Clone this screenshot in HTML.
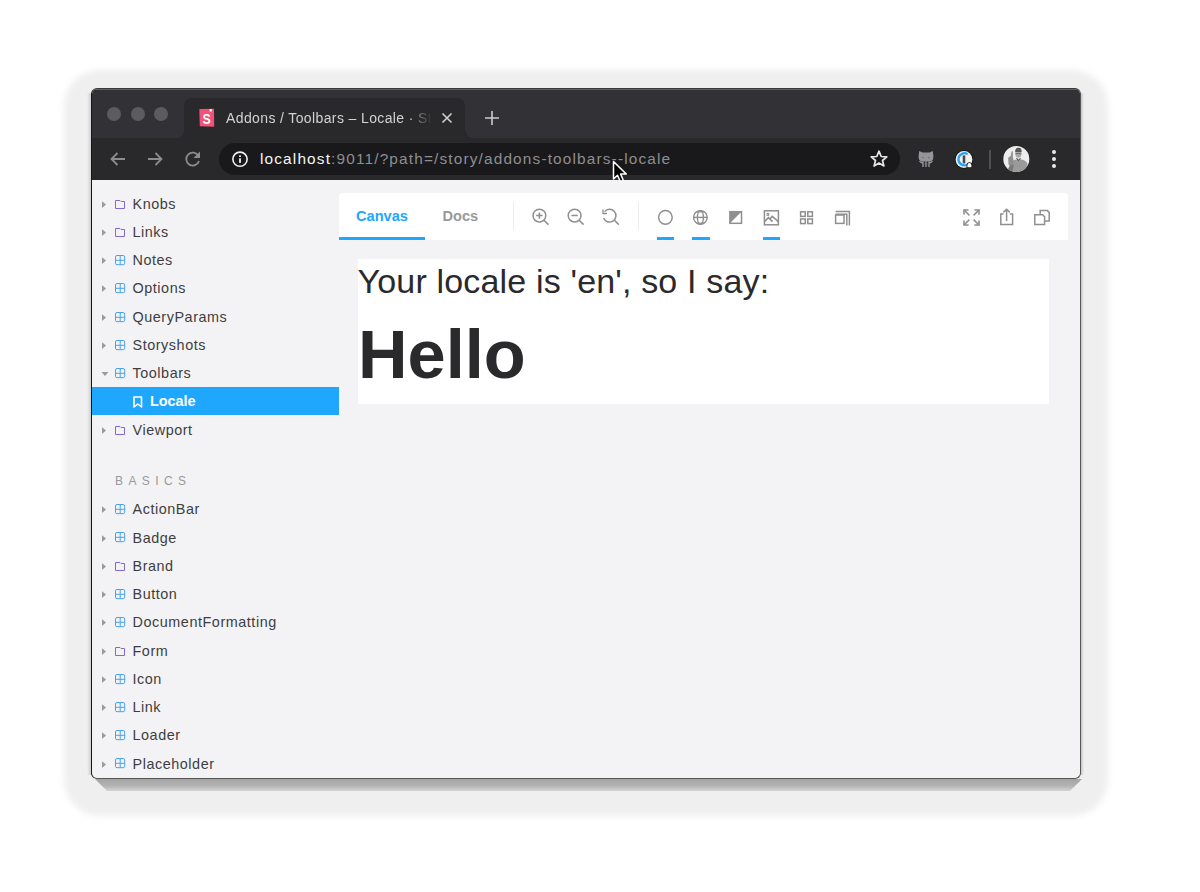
<!DOCTYPE html>
<html><head><meta charset="utf-8">
<style>
*{margin:0;padding:0;box-sizing:border-box}
html,body{width:1200px;height:892px;overflow:hidden;background:#fff;font-family:"Liberation Sans",sans-serif}
.a{position:absolute}
#shadow{left:64px;top:70px;width:1044px;height:746px;border-radius:36px;background:#efefef;filter:blur(3px)}
#shadow2{left:92px;top:779px;width:990px;height:12px;background:linear-gradient(#a4a4a4,#b2b2b2 55%,#d4d4d4);clip-path:polygon(3px 0,100% 0,calc(100% - 12px) 100%,15px 100%)}
#lsh{left:87px;top:93px;width:5px;height:682px;background:linear-gradient(90deg,#efefef,#c8c8c8)}
#rsh{left:1080px;top:93px;width:4px;height:682px;background:linear-gradient(90deg,#b8b8b8,#efefef)}
#win{left:91px;top:88px;width:990px;height:691px;border-radius:6px;background:#f3f3f5;border:1px solid #555;border-left-color:#151515;border-top-color:#3a3a3a}
#tabstrip{left:92px;top:89px;width:988px;height:49px;background:#323236;border-radius:5px 5px 0 0}
#toolbar{left:92px;top:138px;width:988px;height:42px;background:#29292c}
#tab{left:184px;top:98px;width:281px;height:40px;background:#29292c;border-radius:8px 8px 0 0}
.dot{width:14.4px;height:14.4px;border-radius:50%;background:#5c5c5e;top:106.8px}
#url{left:219px;top:143px;width:681px;height:32px;border-radius:16px;background:#19191c}
.urltxt{left:260px;top:150px;font-size:15.4px;letter-spacing:1.15px;color:#8e8e91;white-space:nowrap}
.urltxt b{font-weight:normal;color:#f4f4f4}
.tabtxt{left:226px;top:109.5px;font-size:14px;letter-spacing:0.38px;color:#d2d2d2;white-space:nowrap;width:207px;overflow:hidden;
 -webkit-mask-image:linear-gradient(90deg,#000 184px,rgba(0,0,0,.6) 190px,transparent 206px)}
#sel{left:92px;top:387px;width:247px;height:28px;background:#1ea7fd}
.item{left:132.5px;font-size:14.4px;letter-spacing:0.55px;color:#3e3e40;white-space:nowrap}
#panel{left:339px;top:193px;width:729px;height:47px;background:#fff;border-radius:4px 4px 0 0}
#canvas{left:358px;top:259px;width:691px;height:145px;background:#fff}
.big1{left:357.5px;top:262px;font-size:34px;letter-spacing:0.17px;color:#2a2a2c;white-space:nowrap}
.big2{left:358px;top:315.3px;font-size:68.6px;font-weight:bold;color:#2a2a2c;white-space:nowrap;letter-spacing:0px}
.ptab{top:208px;font-size:14.6px;font-weight:bold;white-space:nowrap}
</style></head><body>
<div id="shadow" class="a"></div>
<div id="shadow2" class="a"></div>
<div id="lsh" class="a"></div>
<div id="rsh" class="a"></div>
<div id="win" class="a"></div>
<div id="tabstrip" class="a"></div>
<div class="a" style="left:96px;top:89px;width:980px;height:1px;background:#606064"></div>
<div class="a dot" style="left:106.8px"></div>
<div class="a dot" style="left:130.5px"></div>
<div class="a dot" style="left:153.8px"></div>
<div id="tab" class="a"></div>
<svg class="a" style="left:176px;top:130px" width="9" height="8"><path d="M0 8Q8 8 8 0V8Z" fill="#29292c"/></svg>
<svg class="a" style="left:465px;top:130px" width="9" height="8"><path d="M9 8Q1 8 1 0V8Z" fill="#29292c"/><rect x="0" y="0" width="1" height="8" fill="#29292c"/></svg>
<svg class="a" style="left:199px;top:108px" width="16" height="20"><path d="M0.3 1.2L1.2 1L15 0.8L15.2 18.8L0.8 18.2Z" fill="#f0527a"/><g transform="translate(7.6,0) scale(0.82,1)"><text x="0" y="15.6" font-family="Liberation Sans" font-weight="bold" font-size="15" fill="#fff" text-anchor="middle">S</text></g><rect x="10.6" y="1.2" width="2.2" height="2.2" fill="#fff"/></svg>
<div class="a tabtxt">Addons / Toolbars – Locale · Storybook</div>
<svg class="a" style="left:441px;top:112px" width="12" height="12"><path d="M1.5 1.5L10.5 10.5M10.5 1.5L1.5 10.5" stroke="#d0d0d0" stroke-width="1.6"/></svg>
<svg class="a" style="left:484px;top:110px" width="16" height="16"><path d="M8 1V15M1 8H15" stroke="#cbcbcb" stroke-width="1.6"/></svg>
<div id="toolbar" class="a"></div>
<svg class="a" style="left:109px;top:151px" width="18" height="16"><path d="M16 8H2.5M8.5 2L2.5 8L8.5 14" fill="none" stroke="#8c8c8e" stroke-width="1.8"/></svg>
<svg class="a" style="left:147px;top:151px" width="18" height="16"><path d="M1 8H14.5M8.5 2L14.5 8L8.5 14" fill="none" stroke="#8c8c8e" stroke-width="1.8"/></svg>
<svg class="a" style="left:184px;top:150px" width="18" height="18"><path d="M14.5 6A6.5 6.5 0 1 0 15 11" fill="none" stroke="#8c8c8e" stroke-width="1.8"/><path d="M16 1.5V8H9.5Z" fill="#8c8c8e"/></svg>
<div id="url" class="a"></div>
<svg class="a" style="left:231px;top:150px" width="18" height="18"><circle cx="9" cy="9.2" r="7.1" fill="none" stroke="#f2f2f2" stroke-width="1.6"/><rect x="8.1" y="8.3" width="1.8" height="4.6" fill="#f2f2f2"/><rect x="8.1" y="5.4" width="1.8" height="1.6" fill="#f2f2f2"/></svg>
<div class="a urltxt"><b>localhost</b>:9011/?path=/story/addons-toolbars--locale</div>
<svg class="a" style="left:869px;top:149px" width="20" height="20"><path d="M10 2.2L12.2 7.5L17.8 7.9L13.5 11.5L14.9 17L10 14L5.1 17L6.5 11.5L2.2 7.9L7.8 7.5Z" fill="none" stroke="#e6e6e6" stroke-width="1.7" stroke-linejoin="round"/></svg>
<svg class="a" style="left:917px;top:149px" width="20" height="20"><path d="M2.2 2L5.5 3.6H12.5L15.8 2L16.4 7Q16.6 11.6 13.5 12.6H4.5Q1.4 11.6 1.6 7Z" fill="#959597"/><path d="M6 12.5V18M9 12.5V18M12 12.5V18M2.5 12Q4 14.5 6 13.5M15.5 12Q14 14.5 12 13.5" fill="none" stroke="#959597" stroke-width="1.4"/><circle cx="6" cy="8.6" r="0.9" fill="#7b5cc4"/><circle cx="12" cy="8.6" r="0.9" fill="#7b5cc4"/><path d="M6.5 14L7.2 15.5M11.5 14L10.8 15.5" stroke="#7b5cc4" stroke-width="1"/></svg>
<svg class="a" style="left:954px;top:149px" width="22" height="22"><circle cx="10" cy="10.5" r="9.3" fill="#111"/><circle cx="10" cy="10.5" r="8.4" fill="#f2f2f2"/><path d="M13.6 5.2A6 6 0 1 0 13 15.7" fill="none" stroke="#27a1f2" stroke-width="2.2"/><rect x="8.7" y="6.4" width="2.6" height="8" fill="#4a4a4a"/><path d="M12.6 19V16Q12.6 13.2 15.4 13.2Q18.2 13.2 18.2 16V19Z" fill="#111"/><path d="M13.4 18.2V16.2Q13.4 14 15.4 14Q17.4 14 17.4 16.2V18.2Z" fill="#fff"/></svg>
<div class="a" style="left:989px;top:150px;width:2px;height:19px;background:#505053"></div>
<svg class="a" style="left:1003px;top:146px" width="27" height="27"><defs><clipPath id="av"><circle cx="13.3" cy="13" r="13"/></clipPath></defs><circle cx="13.3" cy="13" r="13" fill="#ededed"/><g clip-path="url(#av)"><path d="M7.5 28L8.5 18Q9.5 14.2 13 13.4L17.5 13.2Q22 13.8 24.2 17L26 28Z" fill="#9a9a9a"/><ellipse cx="15.4" cy="7.2" rx="3.1" ry="4.6" fill="#a8a8a8"/><path d="M12.2 5.2Q12.4 1.6 15.4 1.8Q18.6 1.6 18.6 5.2L18.4 6H12.4Z" fill="#5a5a5a"/><path d="M12.5 7.6H18.3" stroke="#666" stroke-width="0.9"/><path d="M13.5 12L15.4 14.5L17.5 12" fill="none" stroke="#444" stroke-width="1"/><path d="M5.6 19L5.2 12.5Q5.6 10.2 7.4 10.6L8.6 6Q9.2 4.2 9.9 5.8L9.8 11Q10.6 13.5 10.8 15.5L10.5 20Z" fill="#8e8e8e"/><path d="M4.5 24L7 19H11L9 27Z" fill="#7a7a7a"/></g></svg>
<div class="a" style="left:1052px;top:150px;width:4px;height:4px;border-radius:50%;background:#e8e8e8"></div>
<div class="a" style="left:1052px;top:157px;width:4px;height:4px;border-radius:50%;background:#e8e8e8"></div>
<div class="a" style="left:1052px;top:164px;width:4px;height:4px;border-radius:50%;background:#e8e8e8"></div>
<div id="sel" class="a"></div>
<svg class="a" style="left:133px;top:396px" width="10" height="12"><path d="M1 1H8.5V11L4.75 8L1 11Z" fill="none" stroke="#fff" stroke-width="1.6" stroke-linejoin="round"/></svg>
<div class="a" style="left:150px;top:393.3px;font-size:14.4px;font-weight:bold;color:#fff;letter-spacing:0px">Locale</div>
<div class="a" style="left:115px;top:474px;font-size:12px;letter-spacing:5.4px;color:#999">BASICS</div>
<svg class="a" style="left:102px;top:200.6px" width="5" height="8"><path d="M0 0.2L4 3.6L0 7Z" fill="#9a9a9a"/></svg>
<svg class="a" style="left:115px;top:199.6px" width="11" height="9"><path d="M0.5 0.5H5L6 1.5H9.5V8.5H0.5Z" fill="none" stroke="#8368d6" stroke-width="1"/></svg>
<div class="a item" style="top:195.6px">Knobs</div>
<svg class="a" style="left:102px;top:228.8px" width="5" height="8"><path d="M0 0.2L4 3.6L0 7Z" fill="#9a9a9a"/></svg>
<svg class="a" style="left:115px;top:227.8px" width="11" height="9"><path d="M0.5 0.5H5L6 1.5H9.5V8.5H0.5Z" fill="none" stroke="#8368d6" stroke-width="1"/></svg>
<div class="a item" style="top:223.8px">Links</div>
<svg class="a" style="left:102px;top:257.1px" width="5" height="8"><path d="M0 0.2L4 3.6L0 7Z" fill="#9a9a9a"/></svg>
<svg class="a" style="left:115px;top:255.0px" width="11" height="11"><rect x="0.5" y="0.5" width="9.2" height="9.2" rx="1.5" fill="none" stroke="#4aa3e8" stroke-width="1"/><path d="M0.5 5.3H9.7M5.2 0.5V9.7" stroke="#4aa3e8" stroke-width="1"/></svg>
<div class="a item" style="top:252.1px">Notes</div>
<svg class="a" style="left:102px;top:285.4px" width="5" height="8"><path d="M0 0.2L4 3.6L0 7Z" fill="#9a9a9a"/></svg>
<svg class="a" style="left:115px;top:283.2px" width="11" height="11"><rect x="0.5" y="0.5" width="9.2" height="9.2" rx="1.5" fill="none" stroke="#4aa3e8" stroke-width="1"/><path d="M0.5 5.3H9.7M5.2 0.5V9.7" stroke="#4aa3e8" stroke-width="1"/></svg>
<div class="a item" style="top:280.3px">Options</div>
<svg class="a" style="left:102px;top:313.6px" width="5" height="8"><path d="M0 0.2L4 3.6L0 7Z" fill="#9a9a9a"/></svg>
<svg class="a" style="left:115px;top:311.5px" width="11" height="11"><rect x="0.5" y="0.5" width="9.2" height="9.2" rx="1.5" fill="none" stroke="#4aa3e8" stroke-width="1"/><path d="M0.5 5.3H9.7M5.2 0.5V9.7" stroke="#4aa3e8" stroke-width="1"/></svg>
<div class="a item" style="top:308.6px">QueryParams</div>
<svg class="a" style="left:102px;top:341.9px" width="5" height="8"><path d="M0 0.2L4 3.6L0 7Z" fill="#9a9a9a"/></svg>
<svg class="a" style="left:115px;top:339.8px" width="11" height="11"><rect x="0.5" y="0.5" width="9.2" height="9.2" rx="1.5" fill="none" stroke="#4aa3e8" stroke-width="1"/><path d="M0.5 5.3H9.7M5.2 0.5V9.7" stroke="#4aa3e8" stroke-width="1"/></svg>
<div class="a item" style="top:336.8px">Storyshots</div>
<svg class="a" style="left:101px;top:371.6px" width="8" height="5"><path d="M0.5 0L7.5 0L4 4Z" fill="#9a9a9a"/></svg>
<svg class="a" style="left:115px;top:368.0px" width="11" height="11"><rect x="0.5" y="0.5" width="9.2" height="9.2" rx="1.5" fill="none" stroke="#4aa3e8" stroke-width="1"/><path d="M0.5 5.3H9.7M5.2 0.5V9.7" stroke="#4aa3e8" stroke-width="1"/></svg>
<div class="a item" style="top:365.1px">Toolbars</div>
<svg class="a" style="left:102px;top:426.6px" width="5" height="8"><path d="M0 0.2L4 3.6L0 7Z" fill="#9a9a9a"/></svg>
<svg class="a" style="left:115px;top:425.6px" width="11" height="9"><path d="M0.5 0.5H5L6 1.5H9.5V8.5H0.5Z" fill="none" stroke="#8368d6" stroke-width="1"/></svg>
<div class="a item" style="top:421.6px">Viewport</div>
<svg class="a" style="left:102px;top:506.3px" width="5" height="8"><path d="M0 0.2L4 3.6L0 7Z" fill="#9a9a9a"/></svg>
<svg class="a" style="left:115px;top:504.2px" width="11" height="11"><rect x="0.5" y="0.5" width="9.2" height="9.2" rx="1.5" fill="none" stroke="#4aa3e8" stroke-width="1"/><path d="M0.5 5.3H9.7M5.2 0.5V9.7" stroke="#4aa3e8" stroke-width="1"/></svg>
<div class="a item" style="top:501.3px">ActionBar</div>
<svg class="a" style="left:102px;top:534.5px" width="5" height="8"><path d="M0 0.2L4 3.6L0 7Z" fill="#9a9a9a"/></svg>
<svg class="a" style="left:115px;top:532.4px" width="11" height="11"><rect x="0.5" y="0.5" width="9.2" height="9.2" rx="1.5" fill="none" stroke="#4aa3e8" stroke-width="1"/><path d="M0.5 5.3H9.7M5.2 0.5V9.7" stroke="#4aa3e8" stroke-width="1"/></svg>
<div class="a item" style="top:529.5px">Badge</div>
<svg class="a" style="left:102px;top:562.8px" width="5" height="8"><path d="M0 0.2L4 3.6L0 7Z" fill="#9a9a9a"/></svg>
<svg class="a" style="left:115px;top:561.8px" width="11" height="9"><path d="M0.5 0.5H5L6 1.5H9.5V8.5H0.5Z" fill="none" stroke="#8368d6" stroke-width="1"/></svg>
<div class="a item" style="top:557.8px">Brand</div>
<svg class="a" style="left:102px;top:591.0px" width="5" height="8"><path d="M0 0.2L4 3.6L0 7Z" fill="#9a9a9a"/></svg>
<svg class="a" style="left:115px;top:588.9px" width="11" height="11"><rect x="0.5" y="0.5" width="9.2" height="9.2" rx="1.5" fill="none" stroke="#4aa3e8" stroke-width="1"/><path d="M0.5 5.3H9.7M5.2 0.5V9.7" stroke="#4aa3e8" stroke-width="1"/></svg>
<div class="a item" style="top:586.0px">Button</div>
<svg class="a" style="left:102px;top:619.3px" width="5" height="8"><path d="M0 0.2L4 3.6L0 7Z" fill="#9a9a9a"/></svg>
<svg class="a" style="left:115px;top:617.2px" width="11" height="11"><rect x="0.5" y="0.5" width="9.2" height="9.2" rx="1.5" fill="none" stroke="#4aa3e8" stroke-width="1"/><path d="M0.5 5.3H9.7M5.2 0.5V9.7" stroke="#4aa3e8" stroke-width="1"/></svg>
<div class="a item" style="top:614.3px">DocumentFormatting</div>
<svg class="a" style="left:102px;top:647.5px" width="5" height="8"><path d="M0 0.2L4 3.6L0 7Z" fill="#9a9a9a"/></svg>
<svg class="a" style="left:115px;top:646.5px" width="11" height="9"><path d="M0.5 0.5H5L6 1.5H9.5V8.5H0.5Z" fill="none" stroke="#8368d6" stroke-width="1"/></svg>
<div class="a item" style="top:642.5px">Form</div>
<svg class="a" style="left:102px;top:675.8px" width="5" height="8"><path d="M0 0.2L4 3.6L0 7Z" fill="#9a9a9a"/></svg>
<svg class="a" style="left:115px;top:673.7px" width="11" height="11"><rect x="0.5" y="0.5" width="9.2" height="9.2" rx="1.5" fill="none" stroke="#4aa3e8" stroke-width="1"/><path d="M0.5 5.3H9.7M5.2 0.5V9.7" stroke="#4aa3e8" stroke-width="1"/></svg>
<div class="a item" style="top:670.8px">Icon</div>
<svg class="a" style="left:102px;top:704.0px" width="5" height="8"><path d="M0 0.2L4 3.6L0 7Z" fill="#9a9a9a"/></svg>
<svg class="a" style="left:115px;top:701.9px" width="11" height="11"><rect x="0.5" y="0.5" width="9.2" height="9.2" rx="1.5" fill="none" stroke="#4aa3e8" stroke-width="1"/><path d="M0.5 5.3H9.7M5.2 0.5V9.7" stroke="#4aa3e8" stroke-width="1"/></svg>
<div class="a item" style="top:699.0px">Link</div>
<svg class="a" style="left:102px;top:732.3px" width="5" height="8"><path d="M0 0.2L4 3.6L0 7Z" fill="#9a9a9a"/></svg>
<svg class="a" style="left:115px;top:730.2px" width="11" height="11"><rect x="0.5" y="0.5" width="9.2" height="9.2" rx="1.5" fill="none" stroke="#4aa3e8" stroke-width="1"/><path d="M0.5 5.3H9.7M5.2 0.5V9.7" stroke="#4aa3e8" stroke-width="1"/></svg>
<div class="a item" style="top:727.3px">Loader</div>
<svg class="a" style="left:102px;top:760.5px" width="5" height="8"><path d="M0 0.2L4 3.6L0 7Z" fill="#9a9a9a"/></svg>
<svg class="a" style="left:115px;top:758.4px" width="11" height="11"><rect x="0.5" y="0.5" width="9.2" height="9.2" rx="1.5" fill="none" stroke="#4aa3e8" stroke-width="1"/><path d="M0.5 5.3H9.7M5.2 0.5V9.7" stroke="#4aa3e8" stroke-width="1"/></svg>
<div class="a item" style="top:755.5px">Placeholder</div><div id="panel" class="a"></div>
<div class="a" style="left:339px;top:237px;width:86px;height:3px;background:#1ea7fd"></div>
<div class="a" style="left:656.5px;top:237px;width:17.5px;height:3px;background:#1ea7fd"></div>
<div class="a" style="left:692px;top:237px;width:17.5px;height:3px;background:#1ea7fd"></div>
<div class="a" style="left:762.5px;top:237px;width:17.5px;height:3px;background:#1ea7fd"></div>
<div class="a ptab" style="left:356px;color:#1ea7fd">Canvas</div>
<div class="a ptab" style="left:442.5px;color:#999">Docs</div>
<div class="a" style="left:513px;top:202px;width:1px;height:28px;background:#ececec"></div>
<div class="a" style="left:638px;top:202px;width:1px;height:28px;background:#ececec"></div>
<svg class="a" style="left:530px;top:206px" width="22" height="22" fill="none" stroke="#8f8f8f" stroke-width="1.5">
 <circle cx="9.4" cy="9.6" r="6.4"/><path d="M14 14.2L18.4 18.6M9.4 6.4V12.8M6.2 9.6H12.6"/></svg>
<svg class="a" style="left:565px;top:206px" width="22" height="22" fill="none" stroke="#8f8f8f" stroke-width="1.5">
 <circle cx="9.6" cy="9.6" r="6.4"/><path d="M14.2 14.2L18.6 18.6M6.4 9.6H12.8"/></svg>
<svg class="a" style="left:600px;top:206px" width="22" height="22" fill="none" stroke="#8f8f8f" stroke-width="1.5">
 <path d="M4.6 5.6A6.4 6.4 0 1 1 3.6 12"/><path d="M14.4 14.2L18.8 18.6"/><path d="M3 3.5V7.5H7" stroke-width="1.3"/></svg>
<svg class="a" style="left:655px;top:207px" width="21" height="21" fill="none" stroke="#8f8f8f" stroke-width="1.5">
 <circle cx="10.4" cy="10.4" r="6.8"/></svg>
<svg class="a" style="left:690px;top:207px" width="21" height="21" fill="none" stroke="#8f8f8f" stroke-width="1.4">
 <circle cx="10.4" cy="10.4" r="6.8"/><path d="M3.6 10.4H17.2"/><ellipse cx="10.4" cy="10.4" rx="3" ry="6.8"/><path d="M6.5 4.8H14.3M6.5 16H14.3" stroke-width="1.2"/></svg>
<svg class="a" style="left:725px;top:207px" width="21" height="21">
 <rect x="4.9" y="4.7" width="11.6" height="11.6" fill="none" stroke="#8f8f8f" stroke-width="1.5"/><path d="M4.9 4.7H16.5L4.9 16.3Z" fill="#8f8f8f"/></svg>
<svg class="a" style="left:761px;top:207px" width="21" height="21" fill="none" stroke="#8f8f8f" stroke-width="1.5">
 <rect x="3.4" y="3.8" width="14" height="14"/><path d="M3.4 14.6L7.4 10.6L11.6 14.6M8.8 12L11.2 9.4L17.4 14.6"/><rect x="6.1" y="6.4" width="1.6" height="2" stroke-width="1"/></svg>
<svg class="a" style="left:796px;top:207px" width="21" height="21" fill="none" stroke="#8f8f8f" stroke-width="1.5">
 <rect x="4.6" y="4.8" width="4.6" height="4.6"/><rect x="11.8" y="4.8" width="4.6" height="4.6"/><rect x="4.6" y="12" width="4.6" height="4.6"/><rect x="11.8" y="12" width="4.6" height="4.6"/></svg>
<svg class="a" style="left:831px;top:207px" width="21" height="21" fill="none" stroke="#8f8f8f" stroke-width="1.5">
 <rect x="4.6" y="8" width="8.4" height="8.4"/><path d="M4.6 5.2H15.8V16.4M4.6 2.6H18.4V16.4" transform="translate(0,2)"/></svg>
<svg class="a" style="left:961px;top:207px" width="21" height="21" fill="none" stroke="#8f8f8f" stroke-width="1.5">
 <path d="M3 3L8.4 8.4M18 3L12.6 8.4M3 18L8.4 12.6M18 18L12.6 12.6"/><path d="M3 7.6V3H7.6M13.4 3H18V7.6M3 13.4V18H7.6M18 13.4V18H13.4" stroke-width="1.6"/></svg>
<svg class="a" style="left:996px;top:206px" width="21" height="21" fill="none" stroke="#8f8f8f" stroke-width="1.5">
 <path d="M7.6 8H4.8V18.6H16.6V8H13.8M10.6 15V3.6M7.4 6.4L10.6 3.2L13.8 6.4"/></svg>
<svg class="a" style="left:1032px;top:207px" width="21" height="21" fill="none" stroke="#8f8f8f" stroke-width="1.5">
 <path d="M2.8 7.8H10.6L12.6 9.8V17.6H2.8Z"/><path d="M8.2 7.8V3.6H15.4L17.2 5.4V14H12.6"/></svg>
<div id="canvas" class="a"></div>
<div class="a big1">Your locale is 'en', so I say:</div>
<div class="a big2">Hello</div>
<svg class="a" style="left:611px;top:160px" width="18" height="24"><path d="M2.5 1.5V19L6.5 15.2L9.3 21.6L12.3 20.3L9.6 14.1H15.3Z" fill="#000" stroke="#fff" stroke-width="1.5" stroke-linejoin="round"/></svg>
</body></html>
